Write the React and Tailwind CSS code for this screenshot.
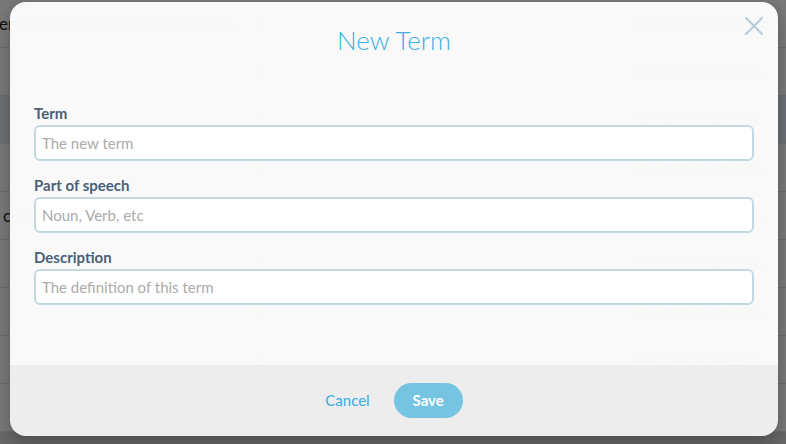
import React from "react";

const rows = [
  { left: "ers when number keys from ke…", right: "Add part of speech…" },
  { left: "", right: "Add part of speech…" },
  { left: "", right: "Add part of speech", hl: true },
  { left: "", right: "Add part of speech…" },
  { left: "curs", right: "Add part of speech…", indent: true },
  { left: "", right: "Add part of speech…" },
  { left: "", right: "Add part of speech…" },
  { left: "", right: "Add part of speech…" },
  { left: "", right: "Add part of speech…" },
];

function Field({ label, placeholder }) {
  return (
    <div className="flex flex-col">
      <label className="text-[15px] leading-[18px] font-bold text-[#4a5f78] mb-[3px]">{label}</label>
      <input
        className="h-[36px] w-full rounded-[6px] border-2 border-[#c4d8e2] bg-white px-[6px] text-[15px] text-[#555] placeholder:text-[#ababab] outline-none"
        placeholder={placeholder}
      />
    </div>
  );
}

export default function App() {
  return (
    <div className="relative w-[786px] h-[444px] overflow-hidden bg-white" style={{ fontFamily: "Lato, 'Open Sans', sans-serif" }}>
      {/* underlying page */}
      <div className="flex flex-col">
        {rows.map((r, i) => (
          <div
            key={i}
            className={`flex h-[48px] items-center border-b border-[#e4e4e4] text-[17px] text-[#262626] ${r.hl ? "bg-[#e6ecf4]" : ""}`}
          >
            <div className={`w-[255px] shrink-0 whitespace-nowrap ${r.indent ? "pl-[3px]" : "-ml-[1px]"}`}>{r.left}</div>
            <div className="w-[378px] shrink-0 text-[#262626]">1</div>
            <div className="w-[138px] overflow-hidden whitespace-nowrap text-[15px] text-[#262626]">{r.right}</div>
          </div>
        ))}
        <div className="h-[12px] bg-[#dcdcdc]" />
      </div>

      {/* overlay */}
      <div className="absolute inset-0 bg-black/[0.53]">
        <div className="absolute left-[10px] top-[2px] w-[768px] h-[434px] rounded-[16px] overflow-hidden flex flex-col shadow-[0_6px_16px_rgba(0,0,0,0.25)]">
          <div className="relative flex-1 flex flex-col bg-[#fbfbfb]/[0.985] px-[24px] pt-[22px]">
            <h2 className="text-center text-[26px] leading-[32px] font-light text-[#3cb0e0]">New Term</h2>
            <button className="absolute right-[14px] top-[14px] w-[20px] h-[20px] flex items-center justify-center">
              <svg width="20" height="20" viewBox="0 0 20 20" fill="none" stroke="#b6ccd8" strokeWidth="2" strokeLinecap="round">
                <path d="M2 2 L18 18 M18 2 L2 18" />
              </svg>
            </button>
            <div className="mt-[48px] flex flex-col gap-[15px]">
              <Field label="Term" placeholder="The new term" />
              <Field label="Part of speech" placeholder="Noun, Verb, etc" />
              <Field label="Description" placeholder="The definition of this term" />
            </div>
          </div>
          <div className="h-[71px] shrink-0 flex items-center justify-center gap-[24px] bg-[#efefef]/[0.985]">
            <button className="text-[15px] text-[#38ade0]">Cancel</button>
            <button className="h-[35px] w-[69px] rounded-full bg-[#74c4e2] text-[15px] font-bold text-white">Save</button>
          </div>
        </div>
      </div>
    </div>
  );
}
